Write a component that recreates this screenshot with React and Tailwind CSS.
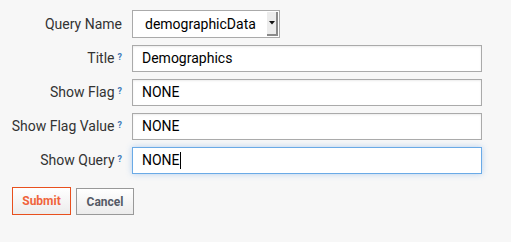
import React from "react";

const Q = () => (
  <sup className="ml-[3px] text-[9px] font-bold text-[#3f7ab8] relative top-[-3px]">?</sup>
);

function Row({ label, help, value, focused }) {
  return (
    <div className="flex items-center h-[27px]">
      <div className="w-[122px] text-right text-[14px] text-[#333] whitespace-nowrap">
        {label}
        {help && <Q />}
      </div>
      <div
        className={
          "ml-[10px] w-[350px] h-[27px] bg-white flex items-center pl-[9px] text-[14px] text-black border " +
          (focused
            ? "border-[#6aaae6] shadow-[0_0_6px_rgba(100,160,230,0.45)]"
            : "border-[#aaaaaa] shadow-[inset_0_1px_2px_rgba(0,0,0,0.08)]")
        }
      >
        {value}
        {focused && <span className="inline-block w-px h-[17px] bg-black" />}
      </div>
    </div>
  );
}

export default function App() {
  return (
    <div
      className="w-[511px] h-[242px] bg-[#f7f7f7] pt-[10px]"
      style={{ fontFamily: "Roboto, 'Liberation Sans', sans-serif" }}
    >
      <div className="flex flex-col gap-[7px]">
        <div className="flex items-center h-[28px]">
          <div className="w-[122px] text-right text-[14px] text-[#333]">Query Name</div>
          <div className="ml-[10px] w-[148px] h-[28px] bg-white border border-[#aaaaaa] flex items-stretch">
            <div className="flex-1 flex items-center pl-[12px] text-[14px] text-black">demographicData</div>
            <div className="w-[11px] my-[1px] mr-[1px] bg-[#ececec] border-r-2 border-b-2 border-[#8a8a8a] flex items-center justify-center">
              <svg width="6" height="4" viewBox="0 0 6 4">
                <path d="M0 0 H6 L3 3.5 Z" fill="#111" />
              </svg>
            </div>
          </div>
        </div>
        <Row label="Title" help value="Demographics" />
        <Row label="Show Flag" help value="NONE" />
        <Row label="Show Flag Value" help value="NONE" />
        <Row label="Show Query" help value="NONE" focused />
      </div>
      <div className="flex gap-[5px] mt-[13px] ml-[12px]">
        <button className="w-[59px] h-[28px] border border-[#e8501e] bg-gradient-to-b from-white to-[#ececec] text-[12px] font-bold text-[#f0643c]">
          Submit
        </button>
        <button className="w-[58px] h-[27px] mt-[1px] border border-[#999] bg-gradient-to-b from-white to-[#ececec] text-[12px] font-bold text-[#555a66]">
          Cancel
        </button>
      </div>
    </div>
  );
}
